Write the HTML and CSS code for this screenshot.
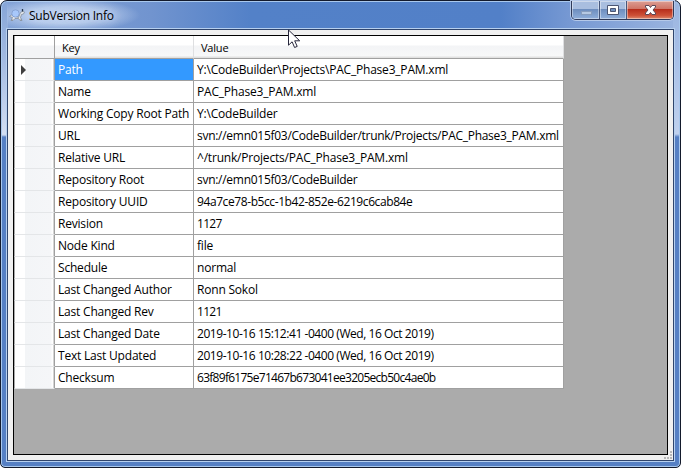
FILE: index.html
```
<!DOCTYPE html>
<html lang="en">
<head>
<meta charset="utf-8">
<title>SubVersion Info</title>
<link rel="stylesheet" href="styles.css">
</head>
<body>
<div class="window">
  <header class="titlebar">
    <svg class="app-icon" width="16" height="14" viewBox="0 0 16 14">
      <path d="M.5 8.500l2-1.500 7 2.500 2-5 2.500-1.500 1.500 1-1 2-2 .5-1 3 1.500 3h-2l-1.500-2H6l-2 2H2l1.500-3z" fill="#e3e6ea" stroke="#7b8592" stroke-width=".7"/>
      <ellipse cx="6.500" cy="5.500" rx="3.700" ry="3.700" fill="#a8c8fa" stroke="#7f9bcb" stroke-width=".8"/>
      <path d="M13.500 1v2.500" stroke="#22344b" stroke-width="1.300"/>
      <path d="M2 12h2M11 12h2" stroke="#8b94a2"/>
    </svg>
    <h1 class="title">SubVersion Info</h1>
    <div class="controls">
      <span class="btn min"><svg width="27" height="18"><rect x="9.500" y="10.500" width="10" height="3" fill="#b6c9e3" stroke="#879dbe"/></svg></span>
      <span class="btn max"><svg width="26" height="18"><path d="M7.500 4.500h11v9h-11zM10.500 7.500v3h5v-3z" fill="#fff" fill-rule="evenodd" stroke="#4c5673"/></svg></span>
      <span class="btn close"><svg width="46" height="18"><path d="M18.500 4.500h3.500l1.500 2 1.500-2h3.500V6l-2.500 3 2.500 3v1.500H25l-1.500-2-1.500 2h-3.500V12l2.500-3-2.500-3z" fill="#fff" stroke="#5a4655"/></svg></span>
    </div>
  </header>
  <main class="client">
    <div class="panel">
      <div class="grid">
        <div class="row head"><span class="handle"></span><span class="key">Key</span><span class="value">Value</span></div>
        <div class="row selected"><span class="handle"><i class="marker"></i></span><span class="key">Path</span><span class="value">Y:\CodeBuilder\Projects\PAC_Phase3_PAM.xml</span></div>
        <div class="row"><span class="handle"></span><span class="key">Name</span><span class="value">PAC_Phase3_PAM.xml</span></div>
        <div class="row"><span class="handle"></span><span class="key">Working Copy Root Path</span><span class="value">Y:\CodeBuilder</span></div>
        <div class="row"><span class="handle"></span><span class="key">URL</span><span class="value url">svn://emn015f03/CodeBuilder/trunk/Projects/PAC_Phase3_PAM.xml</span></div>
        <div class="row"><span class="handle"></span><span class="key">Relative URL</span><span class="value">^/trunk/Projects/PAC_Phase3_PAM.xml</span></div>
        <div class="row"><span class="handle"></span><span class="key">Repository Root</span><span class="value url">svn://emn015f03/CodeBuilder</span></div>
        <div class="row"><span class="handle"></span><span class="key">Repository UUID</span><span class="value uuid">94a7ce78-b5cc-1b42-852e-6219c6cab84e</span></div>
        <div class="row"><span class="handle"></span><span class="key">Revision</span><span class="value number">1127</span></div>
        <div class="row"><span class="handle"></span><span class="key">Node Kind</span><span class="value">file</span></div>
        <div class="row"><span class="handle"></span><span class="key">Schedule</span><span class="value">normal</span></div>
        <div class="row"><span class="handle"></span><span class="key">Last Changed Author</span><span class="value">Ronn Sokol</span></div>
        <div class="row"><span class="handle"></span><span class="key">Last Changed Rev</span><span class="value number">1121</span></div>
        <div class="row"><span class="handle"></span><span class="key">Last Changed Date</span><span class="value date">2019-10-16 15:12:41 -0400 (Wed, 16 Oct 2019)</span></div>
        <div class="row"><span class="handle"></span><span class="key">Text Last Updated</span><span class="value date">2019-10-16 10:28:22 -0400 (Wed, 16 Oct 2019)</span></div>
        <div class="row"><span class="handle"></span><span class="key">Checksum</span><span class="value hash">63f89f6175e71467b673041ee3205ecb50c4ae0b</span></div>
      </div>
    </div>
    <svg class="grip" width="8" height="8" fill="#b8b8b8"><path d="M6 0h2v2H6zM6 3h2v2H6zM0 6h2v2H0zM3 6h2v2H3zM6 6h2v2H6z"/></svg>
  </main>
</div>
<svg class="cursor" width="13" height="20" viewBox="0 0 13 20"><path d="M.5 1v15.200l3.600-3.400 2.500 5.700 2.600-1.100-2.500-5.600h5z" fill="#fff" stroke="#25253a"/></svg>
</body>
</html>
```
FILE: styles.css
```
* { box-sizing: border-box; }
body {
  margin: 0;
  width: 681px;
  height: 468px;
  overflow: hidden;
  background: #fff;
  font: 12px/20px "Open Sans", "Noto Sans", sans-serif;
  color: #000;
}
.window {
  display: flex;
  flex-direction: column;
  width: 681px;
  height: 468px;
  padding: 0 6px 6px;
  border: 1px solid #131a2c;
  border-radius: 7px 7px 5px 5px;
  box-shadow: inset 0 0 0 1px #a9c8ed;
  background:
    linear-gradient(180deg, #86a5d8 0, #a4bbe2 60px, #d3def2 133px, #cbd8ef 134px, #5680c4 136px, #5680c4 100%) left top / 7px 100% no-repeat,
    linear-gradient(180deg, #9ab5e0 0, #a9c0e7 60px, #c0d1ee 133px, #5680c4 136px, #5680c4 100%) right top / 7px 100% no-repeat,
    linear-gradient(#5680c4, #5680c4) left bottom / 100% 7px no-repeat,
    linear-gradient(90deg, #86a5d8 0, #7194cf 150px, #5381c8 250px, #5280c8 500px, #7799d3 570px, #9bb5e0 100%);
}
.titlebar {
  display: flex;
  height: 27px;
  padding-left: 2px;
  background: radial-gradient(ellipse 75px 17px at 58px 14px, rgba(210,224,246,.8) 0, rgba(210,224,246,.65) 50%, rgba(210,224,246,0) 100%);
}
.app-icon { margin: 7px 4px 0 0; }
.title {
  margin: 6px 0 0;
  font-size: 12px;
  line-height: 18px;
  font-weight: 400;
  letter-spacing: -.25px;
  text-shadow: 0 0 8px #c9daf5, 0 0 8px #c9daf5;
}
.controls {
  display: flex;
  margin-left: auto;
  width: 103px;
  height: 19px;
  border: 1px solid #303b5a;
  border-top: 0;
  border-radius: 0 0 5px 5px;
  overflow: hidden;
  box-shadow: 0 0 0 1px #b5c9e9;
}
.btn { box-shadow: inset 0 0 0 1px rgba(255,255,255,.42); }
.btn svg { display: block; }
.min, .max {
  border-right: 1px solid #46577c;
  background: linear-gradient(#a9bedf 0 45%, #6d8dbe 46%, #90afdb);
}
.min { width: 28px; }
.max { width: 27px; }
.close { width: 46px; background: linear-gradient(#dc9e94 0, #cf7364 45%, #b62d1b 46%, #cd5137 80%, #dc8b70); }
.client {
  position: relative;
  flex: 1;
  margin-top: 1px;
  padding: 5px;
  border: 1px solid #30456c;
  box-shadow: 0 0 0 1px #b7d0ef;
  background: #f0f0f0;
}
.panel {
  height: 420px;
  width: 655px;
  border: 1px solid #000;
  background: #ababab;
}
.grid { width: 550px; }
.row {
  display: grid;
  grid-template-columns: 41px 139px 370px;
  height: 22px;
  background: #fff;
}
.row > span {
  border-right: 1px solid #a0a0a0;
  border-bottom: 1px solid #a0a0a0;
  white-space: pre;
}
.key, .value {
  padding: 1px 0 0 3px;
  letter-spacing: -.2px;
}
.url { letter-spacing: -.28px; }
.uuid { letter-spacing: -.41px; }
.date { letter-spacing: -.44px; }
.number { letter-spacing: -.7px; }
.hash { letter-spacing: -.72px; }
.row > .handle {
  display: flex;
  align-items: center;
  padding-left: 6px;
  border-left: 1px solid #a8a8a8;
  border-bottom-color: #e4e6e8;
  background: linear-gradient(90deg, #fff 10px, #f3f5f7 10px, #f5f6f8 36px, #fff 37px, #fff 38px, #d4d4d4 38px);
}
.marker {
  border: 5px solid transparent;
  border-left-color: #404040;
  border-right: 0;
}
.head { height: 23px; background: linear-gradient(#fff 9px, #f3f4f6 10px, #f7f8f9 20px, #e1e1e1 21px); }
.head > .handle { background: linear-gradient(#fff 9px, #f3f4f6 10px); border-bottom-color: #a0a0a0; }
.head > .key, .head > .value { padding: 2px 0 0 7px; border-right-color: #dedfe1; font-size: 11px; }
.selected > .key { background: #39f; color: #fff; }
.grip { position: absolute; right: 1px; bottom: 1px; }
.cursor { position: absolute; left: 288px; top: 29px; }
```
